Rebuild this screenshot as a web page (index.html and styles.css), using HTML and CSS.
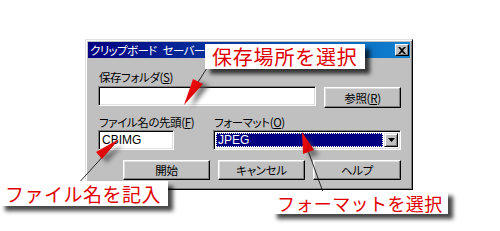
FILE: index.html
```html
<!DOCTYPE html>
<html lang="ja">
<head>
<meta charset="utf-8">
<title>クリップボード セーバー</title>
<link rel="stylesheet" href="styles.css">
</head>
<body>
<div class="page">
  <div class="dialog">
    <div class="titlebar">
      <span class="title">クリップボード セーバー</span>
      <span class="close">
        <svg width="8" height="7" viewBox="0 0 8 7"><path d="M0 0h2l2 2 2-2h2L5 3.5 8 7H6L4 5 2 7H0l3-3.5z" fill="#000"/></svg>
      </span>
    </div>
    <div class="content">
      <div class="label">保存フォルダ(<u>S</u>)</div>
      <div class="row1">
        <div class="field wide"></div>
        <div class="btn browse">参照(<u>R</u>)</div>
      </div>
      <div class="row2">
        <div class="col first">
          <div class="label">ファイル名の先頭(<u>F</u>)</div>
          <div class="field short"><span class="ascii">CBIMG</span></div>
        </div>
        <div class="col">
          <div class="label">フォーマット(<u>O</u>)</div>
          <div class="combo">
            <div class="sel"><span class="ascii">JPEG</span></div>
            <div class="arrow"><svg width="7" height="4" viewBox="0 0 7 4"><path d="M0 0h7L3.5 4z" fill="#000"/></svg></div>
          </div>
        </div>
      </div>
      <div class="buttons">
        <div class="btn act">開始</div>
        <div class="btn act">キャンセル</div>
        <div class="btn act last">ヘルプ</div>
      </div>
    </div>
  </div>

  <svg class="pointers" width="500" height="231" viewBox="0 0 500 231">
    <defs>
      <filter id="blur" x="-50%" y="-50%" width="200%" height="200%"><feGaussianBlur stdDeviation="2.2"/></filter>
      <linearGradient id="red" x1="0" y1="0" x2="1" y2="1">
        <stop offset="0" stop-color="#ff1010"/>
        <stop offset="1" stop-color="#c00000"/>
      </linearGradient>
    </defs>
    <g filter="url(#blur)" fill="#555" opacity="0.75">
      <polygon points="191,108 200,81 209,86"/>
      <polygon points="123,145 101,157 107,163"/>
      <polygon points="307,138 309,158 319,155"/>
    </g>
    <g stroke="#000" stroke-width="0.8" fill="none">
      <line x1="207" y1="68" x2="186" y2="101"/>
      <line x1="76" y1="186" x2="117" y2="141"/>
      <line x1="323" y1="192" x2="302" y2="134"/>
    </g>
    <g fill="url(#red)">
      <polygon points="184,105 193,79 203,84"/>
      <polygon points="119,139 96,152 102,159"/>
      <polygon points="302,132 303,154 314,150"/>
    </g>
  </svg>

  <div class="callout c1">保存場所を選択</div>
  <div class="callout c2">ファイル名を記入</div>
  <div class="callout c3">フォーマットを選択</div>
</div>
</body>
</html>
```
FILE: styles.css
```css
* { box-sizing: border-box; }
body {
  margin: 0;
  background: #fff;
  font-family: "Noto Sans CJK JP", "DejaVu Sans", sans-serif;
}
.page {
  position: relative;
  width: 500px;
  height: 231px;
  overflow: hidden;
  background: #fff;
  padding-top: 39px;
}
.dialog {
  margin-left: 85px;
  width: 328px;
  height: 151px;
  background: #c0c0c0;
  border: 1px solid;
  border-color: #dfdfdf #000 #000 #dfdfdf;
  box-shadow: inset 1px 1px #fff, inset -1px -1px #808080;
  padding: 2px;
  display: flex;
  flex-direction: column;
}
.titlebar {
  height: 16px;
  background: linear-gradient(to right, #000080, #1084d0);
  display: flex;
  align-items: center;
  justify-content: space-between;
  padding-left: 2px;
}
.title {
  color: #fff;
  font-size: 11.5px;
  line-height: 14px;
  font-feature-settings: "palt";
  letter-spacing: -0.6px;
  word-spacing: 4px;
}
.close {
  width: 14px;
  height: 12px;
  margin-right: 1px;
  background: #c0c0c0;
  border: 1px solid;
  border-color: #fff #000 #000 #fff;
  box-shadow: inset -1px -1px #808080;
  display: flex;
  align-items: center;
  justify-content: center;
}
.close svg { display: block; }
.content {
  padding: 12px 9px 0 10px;
  font-size: 12px;
  color: #000;
}
.label {
  height: 14px;
  line-height: 14px;
  font-size: 11.5px;
  font-feature-settings: "palt";
  letter-spacing: -0.4px;
  white-space: nowrap;
  padding-left: 1px;
}
.label u { text-underline-offset: 1px; }
.row1 {
  display: flex;
  gap: 8px;
  margin-top: 2px;
  align-items: flex-start;
}
.field {
  height: 20px;
  background: #fff;
  border: 1px solid;
  border-color: #808080 #fff #fff #808080;
  box-shadow: inset 1px 1px #000, inset -1px -1px #dfdfdf;
  display: flex;
  align-items: center;
  padding-left: 3px;
}
.wide { width: 218px; }
.short { width: 76px; }
.ascii {
  font-family: "Liberation Sans", Arial, sans-serif;
  font-size: 12px;
  line-height: 14px;
}
.btn {
  background: #c0c0c0;
  border: 1px solid;
  border-color: #fff #000 #000 #fff;
  box-shadow: inset -1px -1px #808080, inset 1px 1px #dfdfdf;
  display: flex;
  align-items: center;
  justify-content: center;
  font-size: 11.5px;
  font-feature-settings: "palt";
  letter-spacing: -0.3px;
  white-space: nowrap;
}
.browse {
  width: 77px;
  height: 21px;
  margin-top: 1px;
}
.row2 {
  display: flex;
  margin-top: 7px;
}
.col .label { margin-bottom: 1px; }
.col.first { width: 115px; }
.combo {
  width: 188px;
  height: 20px;
  background: #fff;
  border: 1px solid;
  border-color: #808080 #fff #fff #808080;
  box-shadow: inset 1px 1px #000, inset -1px -1px #dfdfdf;
  display: flex;
  padding: 2px;
  gap: 1px;
}
.sel {
  flex: 1;
  background: #000080;
  color: #fff;
  outline: 1px dotted #fff;
  outline-offset: -1px;
  display: flex;
  align-items: center;
  padding-left: 2px;
}
.arrow {
  width: 14px;
  background: #c0c0c0;
  border: 1px solid;
  border-color: #dfdfdf #000 #000 #dfdfdf;
  box-shadow: inset 1px 1px #fff, inset -1px -1px #808080;
  display: flex;
  align-items: center;
  justify-content: center;
}
.arrow svg { display: block; }
.buttons {
  display: flex;
  gap: 8px;
  margin-top: 10px;
  padding-left: 25px;
}
.act {
  width: 87px;
  height: 20px;
}
.act.last { width: 88px; }

.pointers {
  position: absolute;
  left: 0;
  top: 0;
}
.callout {
  position: absolute;
  background: #fff;
  color: #e00000;
  white-space: nowrap;
  box-shadow: 5px 5px 4px rgba(0, 0, 0, 0.72);
  display: flex;
  align-items: center;
}
.c1 {
  left: 205px;
  top: 44px;
  width: 160px;
  height: 25px;
  font-size: 20px;
  letter-spacing: 0.8px;
  padding-left: 7px;
}
.c2 {
  left: 0;
  top: 181px;
  width: 168px;
  height: 25px;
  font-size: 19px;
  letter-spacing: 0.5px;
  padding-left: 5px;
}
.c3 {
  left: 272px;
  top: 191px;
  width: 176px;
  height: 23px;
  font-size: 18px;
  letter-spacing: 0.4px;
  padding-left: 5px;
}
```
